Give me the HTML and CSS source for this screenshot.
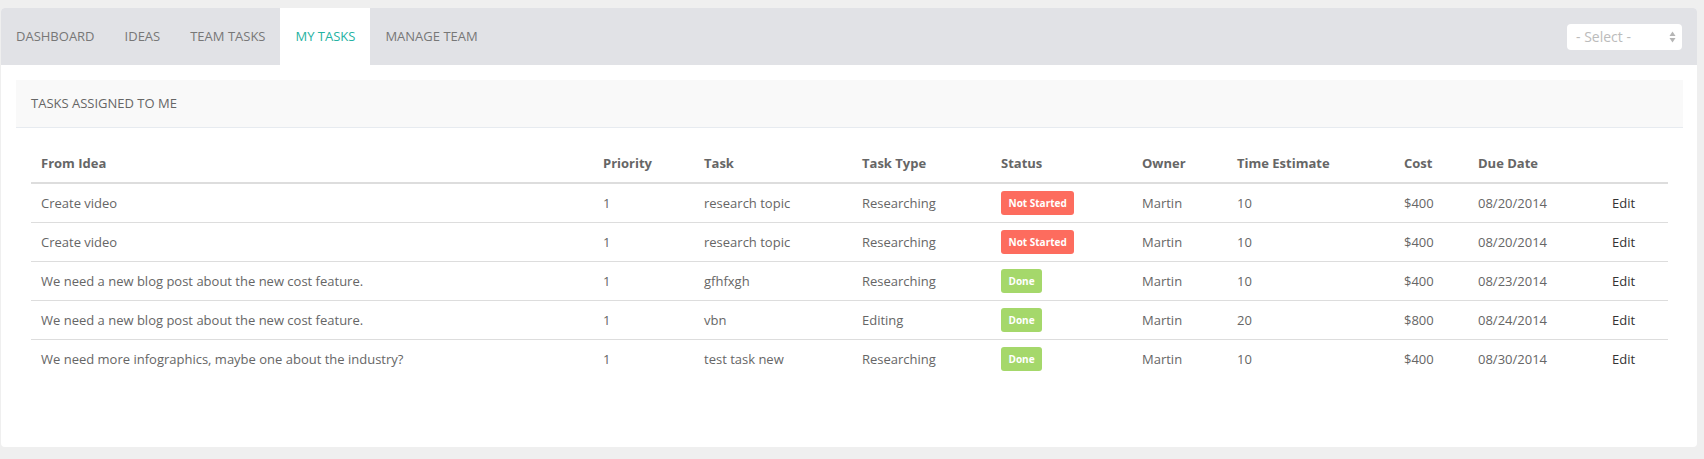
FILE: index.html
```html
<!DOCTYPE html>
<html>
<head>
<meta charset="utf-8">
<link rel="stylesheet" href="styles.css">
</head>
<body>
<div class="card">
  <div class="tabbar">
    <nav class="tabs">
      <a class="tab" href="#">DASHBOARD</a>
      <a class="tab" href="#">IDEAS</a>
      <a class="tab" href="#">TEAM TASKS</a>
      <a class="tab active" href="#">MY TASKS</a>
      <a class="tab" href="#">MANAGE TEAM</a>
    </nav>
    <div class="select">
      <span>- Select -</span>
      <svg class="arrows" width="7" height="12" viewBox="0 0 7 12"><path d="M3.5 0.5 L6.5 5 L0.5 5 Z" fill="#b5b5b5"/><path d="M0.5 7 L6.5 7 L3.5 11.5 Z" fill="#b5b5b5"/></svg>
    </div>
  </div>
  <div class="content">
    <div class="panel">
      <div class="panel-heading">TASKS ASSIGNED TO ME</div>
      <div class="panel-body">
        <table class="tasks">
          <colgroup>
            <col class="c-idea"><col class="c-prio"><col class="c-task"><col class="c-type"><col class="c-status"><col class="c-owner"><col class="c-time"><col class="c-cost"><col class="c-due"><col class="c-edit">
          </colgroup>
          <thead>
            <tr><th>From Idea</th><th>Priority</th><th>Task</th><th>Task Type</th><th>Status</th><th>Owner</th><th>Time Estimate</th><th>Cost</th><th>Due Date</th><th></th></tr>
          </thead>
          <tbody>
            <tr><td>Create video</td><td>1</td><td>research topic</td><td>Researching</td><td><span class="badge badge-red">Not Started</span></td><td>Martin</td><td>10</td><td>$400</td><td>08/20/2014</td><td><a class="edit" href="#">Edit</a></td></tr>
            <tr><td>Create video</td><td>1</td><td>research topic</td><td>Researching</td><td><span class="badge badge-red">Not Started</span></td><td>Martin</td><td>10</td><td>$400</td><td>08/20/2014</td><td><a class="edit" href="#">Edit</a></td></tr>
            <tr><td>We need a new blog post about the new cost feature.</td><td>1</td><td>gfhfxgh</td><td>Researching</td><td><span class="badge badge-green">Done</span></td><td>Martin</td><td>10</td><td>$400</td><td>08/23/2014</td><td><a class="edit" href="#">Edit</a></td></tr>
            <tr><td>We need a new blog post about the new cost feature.</td><td>1</td><td>vbn</td><td>Editing</td><td><span class="badge badge-green">Done</span></td><td>Martin</td><td>20</td><td>$800</td><td>08/24/2014</td><td><a class="edit" href="#">Edit</a></td></tr>
            <tr><td>We need more infographics, maybe one about the industry?</td><td>1</td><td>test task new</td><td>Researching</td><td><span class="badge badge-green">Done</span></td><td>Martin</td><td>10</td><td>$400</td><td>08/30/2014</td><td><a class="edit" href="#">Edit</a></td></tr>
          </tbody>
        </table>
      </div>
    </div>
  </div>
</div>
</body>
</html>
```
FILE: styles.css
```css
html, body {
  margin: 0;
}
body {
  padding: 8px 7px 12px 1px;
  background: #efefef;
  font-family: "Open Sans", "DejaVu Sans", sans-serif;
  font-size: 13px;
  color: #666;
}
.card {
  background: #fff;
  border-radius: 4px;
  overflow: hidden;
  padding-bottom: 54px;
}
.tabbar {
  display: flex;
  justify-content: space-between;
  align-items: center;
  height: 57px;
  background: #e1e2e6;
  padding-right: 15px;
}
.tabs {
  display: flex;
  height: 100%;
}
.tab {
  display: block;
  padding: 0 15px;
  line-height: 57px;
  color: #777;
  text-decoration: none;
}
.tab.active {
  background: #fff;
  color: #25b2a2;
}
.select {
  width: 115px;
  height: 26px;
  box-sizing: border-box;
  background: #fff;
  border-radius: 4px;
  display: flex;
  align-items: center;
  justify-content: space-between;
  padding: 0 6px 0 9px;
  font-size: 14px;
  color: #bbb;
}
.arrows {
  display: block;
}
.content {
  padding: 15px 14px 0 15px;
}
.panel-heading {
  height: 47px;
  line-height: 47px;
  background: #f9f9f9;
  border-bottom: 1px solid #e7ebf0;
  padding: 0 15px;
  color: #666;
}
.panel-body {
  padding: 16px 15px 15px;
}
.tasks {
  width: 100%;
  border-collapse: separate;
  border-spacing: 0;
  table-layout: fixed;
}
.tasks th,
.tasks td {
  padding: 9px 10px;
  height: 20px;
  line-height: 20px;
  text-align: left;
  white-space: nowrap;
}
.tasks th {
  font-weight: 700;
  color: #666;
  border-bottom: 2px solid #ddd;
}
.tasks tbody tr + tr td {
  border-top: 1px solid #ddd;
}
.c-idea { width: 562px; }
.c-prio { width: 101px; }
.c-task { width: 158px; }
.c-type { width: 139px; }
.c-status { width: 141px; }
.c-owner { width: 95px; }
.c-time { width: 167px; }
.c-cost { width: 74px; }
.c-due { width: 134px; }
.c-edit { width: 66px; }
.badge {
  padding: 5px 7.5px;
  border-radius: 3px;
  font-size: 10px;
  line-height: 14px;
  font-weight: 700;
  color: #fff;
  vertical-align: 1px;
}
.badge-red {
  background: #fd6c5e;
}
.badge-green {
  background: #a5d86b;
}
.edit {
  color: #333;
  text-decoration: none;
}
```
